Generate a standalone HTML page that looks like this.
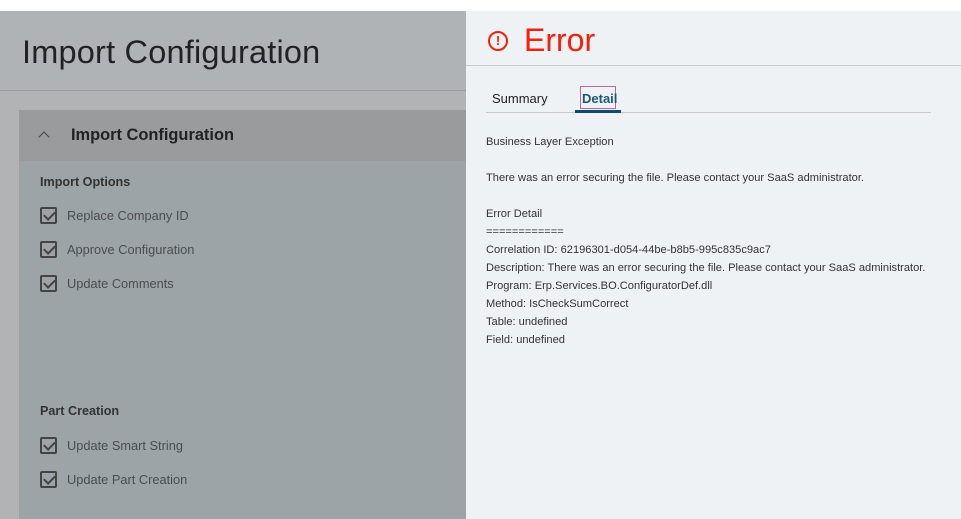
<!DOCTYPE html>
<html><head><style>
*{margin:0;padding:0;box-sizing:border-box}
body{width:961px;height:519px;overflow:hidden;background:#fff;font-family:"Liberation Sans",sans-serif;position:relative}
.left{position:absolute;left:0;top:11px;width:466px;height:508px;background:#b2b3b4}
.left .hdr{position:absolute;left:0;top:0;width:466px;height:80px;background:#b0b3b6;border-bottom:1px solid #999c9f}
.left h1{position:absolute;left:22px;top:23px;font-size:32.5px;font-weight:normal;color:#222;letter-spacing:0.2px}
.panel{position:absolute;left:19px;top:99px;width:447px;height:409px;background:#9da4a7}
.ph{height:51px;background:#9a9b9c;position:relative}
.ph .t{position:absolute;left:52px;top:16px;font-size:16.4px;font-weight:bold;color:#222}
.ph .c{position:absolute;left:21px;top:23px;width:8px;height:8px;border-left:1.5px solid #444;border-top:1.5px solid #444;transform:rotate(45deg)}
.sec{position:absolute;left:21px;font-size:12.6px;font-weight:bold;color:#333}
.cb{position:absolute;left:21px;font-size:12.8px;color:#4a4d50}
.cb i{position:absolute;left:0;top:-1px;width:17px;height:17px;border:2px solid #444;border-radius:2px}
.cb i:after{content:"";position:absolute;left:4px;top:0px;width:5px;height:9px;border-right:2px solid #444;border-bottom:2px solid #444;transform:rotate(45deg)}
.cb span{position:absolute;left:27px;top:0;white-space:nowrap}
.right{position:absolute;left:466px;top:11px;width:495px;height:508px;background:#eff2f5}
.err{position:absolute;left:22px;top:11px;color:#f5200c;font-size:32px}
.ico{position:absolute;left:22px;top:20px;width:20px;height:20px;border:2.5px solid #f5200c;border-radius:50%;color:#f5200c;font-size:13px;font-weight:bold;text-align:center;line-height:15px}
.hl{position:absolute;left:0;top:54px;width:495px;height:1px;background:#c8cacc}
.tabs{position:absolute;left:20px;top:101px;width:445px;height:1px;background:#c8c8c8}
.tab1{position:absolute;left:26px;top:80px;font-size:13px;color:#222}
.tab2{position:absolute;left:114px;top:75px;width:36px;height:23px;border:1px solid #b46ba5;font-size:13px;color:#1f5678;font-weight:bold;padding:4px 0 0 1px}
.ul{position:absolute;left:109px;top:99px;width:46px;height:3px;background:#0b4c6e}
.txt{position:absolute;left:20px;font-size:11.1px;color:#333;line-height:18px;white-space:nowrap}
</style></head><body>
<div class="left">
 <div class="hdr"><h1>Import Configuration</h1></div>
 <div class="panel">
  <div class="ph"><div class="c"></div><div class="t">Import Configuration</div></div>
  <div class="sec" style="top:65px">Import Options</div>
  <div class="cb" style="top:98px"><i></i><span>Replace Company ID</span></div>
  <div class="cb" style="top:132px"><i></i><span>Approve Configuration</span></div>
  <div class="cb" style="top:166px"><i></i><span>Update Comments</span></div>
  <div class="sec" style="top:294px">Part Creation</div>
  <div class="cb" style="top:328px"><i></i><span>Update Smart String</span></div>
  <div class="cb" style="top:362px"><i></i><span>Update Part Creation</span></div>
 </div>
</div>
<div class="right">
 <div class="ico">!</div>
 <div class="err" style="left:58px">Error</div>
 <div class="hl"></div>
 <div class="tab1">Summary</div>
 <div class="tab2">Detail</div>
 <div class="tabs"></div>
 <div class="ul"></div>
 <div class="txt" style="top:122px">Business Layer Exception</div>
 <div class="txt" style="top:158px">There was an error securing the file. Please contact your SaaS administrator.</div>
 <div class="txt" style="top:194px">Error Detail<br>============<br>Correlation ID: 62196301-d054-44be-b8b5-995c835c9ac7<br>Description: There was an error securing the file. Please contact your SaaS administrator.<br>Program: Erp.Services.BO.ConfiguratorDef.dll<br>Method: IsCheckSumCorrect<br>Table: undefined<br>Field: undefined</div>
</div>
</body></html>
